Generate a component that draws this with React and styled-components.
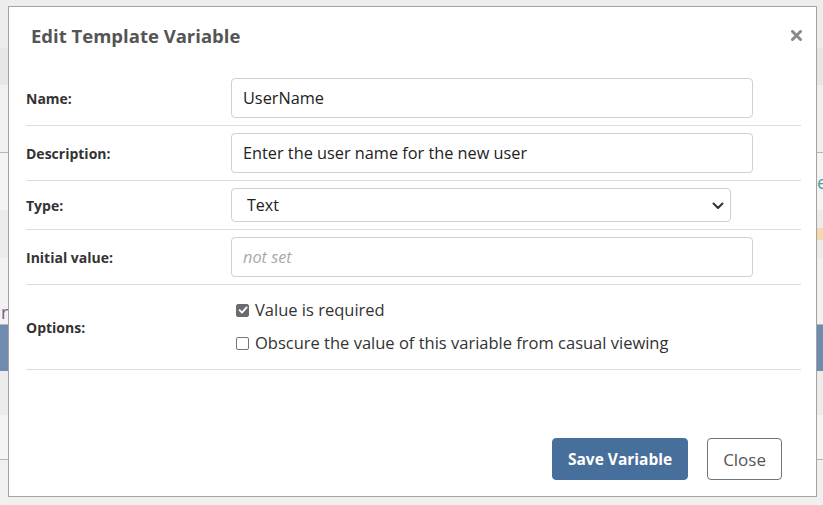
import React, { useState } from 'react'
import styled, { createGlobalStyle } from 'styled-components'

const GlobalStyle = createGlobalStyle`
    html, body {
        margin: 0;
        padding: 0;
    }
    body {
        font-family: "Open Sans", "Liberation Sans", sans-serif;
        color: #333333;
    }
`

const stripes = [
    { h: 48, bg: '#ededed' },
    { h: 37, bg: '#e6e6e6' },
    { h: 68, bg: '#f0f0f0', line: true },
    { h: 57, bg: '#f4f4f4', text: 'e', color: '#4aa0a0', side: 'right' },
    { h: 48, bg: '#ececec', mark: true },
    { h: 42, bg: '#f2f2f2' },
    { h: 25, bg: '#f2f2f2', text: 'r', color: '#7b5c8e', side: 'left', line: true },
    { h: 46, bg: '#6f8cae' },
    { h: 44, bg: '#ececec' },
    { h: 45, bg: '#f4f4f4', line: true },
    { h: 45, bg: '#f0f0f0' },
]

const Check_mark = () => (
    <svg width="10" height="10" viewBox="0 0 10 10">
        <path d="M1.6 5.2 L4 7.6 L8.6 2.4" fill="none" stroke="#fff" strokeWidth="1.9" strokeLinecap="round" strokeLinejoin="round" />
    </svg>
)

const App = () => {

    let [required, setRequired] = useState(true)
    let [obscure, setObscure] = useState(false)

    return (
        <>
            <GlobalStyle />
            <Page>
                <Backdrop>
                    {stripes.map((s, i) => (
                        <Stripe key={i} $h={s.h} $bg={s.bg} $line={s.line}>
                            {s.text ? <StripeText $color={s.color} $side={s.side}>{s.text}</StripeText> : null}
                            {s.mark ? <Mark /> : null}
                        </Stripe>
                    ))}
                </Backdrop>

                <Modal>
                    <Modal_header>
                        <Modal_title>Edit Template Variable</Modal_title>
                        <Close_x aria-label="Close">
                            <svg width="11" height="11" viewBox="0 0 11 11">
                                <path d="M1.5 1.5 L9.5 9.5 M9.5 1.5 L1.5 9.5" stroke="#8a8a8a" strokeWidth="3" strokeLinecap="round" />
                            </svg>
                        </Close_x>
                    </Modal_header>

                    <Modal_body>
                        <Form_row>
                            <Field_label>Name:</Field_label>
                            <Field_cell>
                                <Text_input defaultValue="UserName" />
                            </Field_cell>
                        </Form_row>
                        <Form_row>
                            <Field_label>Description:</Field_label>
                            <Field_cell>
                                <Text_input defaultValue="Enter the user name for the new user" />
                            </Field_cell>
                        </Form_row>
                        <Form_row>
                            <Field_label>Type:</Field_label>
                            <Field_cell>
                                <Select_wrap>
                                    <Select_box defaultValue="text">
                                        <option value="text">Text</option>
                                        <option value="number">Number</option>
                                    </Select_box>
                                    <Chevron width="12" height="8" viewBox="0 0 12 8">
                                        <path d="M1.5 1.5 L6 6 L10.5 1.5" fill="none" stroke="#333" strokeWidth="2" strokeLinecap="round" strokeLinejoin="round" />
                                    </Chevron>
                                </Select_wrap>
                            </Field_cell>
                        </Form_row>
                        <Form_row>
                            <Field_label>Initial value:</Field_label>
                            <Field_cell>
                                <Text_input placeholder="not set" />
                            </Field_cell>
                        </Form_row>
                        <Form_row $pad="8px">
                            <Field_label>Options:</Field_label>
                            <Field_cell>
                                <Check_list>
                                    <Check_label>
                                        <Check_box $checked={required} onClick={() => setRequired(v => !v)}>
                                            {required ? <Check_mark /> : null}
                                        </Check_box>
                                        Value is required
                                    </Check_label>
                                    <Check_label>
                                        <Check_box $checked={obscure} onClick={() => setObscure(v => !v)}>
                                            {obscure ? <Check_mark /> : null}
                                        </Check_box>
                                        Obscure the value of this variable from casual viewing
                                    </Check_label>
                                </Check_list>
                            </Field_cell>
                        </Form_row>
                    </Modal_body>

                    <Modal_footer>
                        <Action_btn $primary>Save Variable</Action_btn>
                        <Action_btn>Close</Action_btn>
                    </Modal_footer>
                </Modal>
            </Page>
        </>
    )
}

const Page = styled.div`
    position: relative;
    width: 823px;
    height: 505px;
    overflow: hidden;
    background: #efefef;
`
const Backdrop = styled.div`
    display: flex;
    flex-direction: column;
`
const Stripe = styled.div`
    height: ${p => p.$h}px;
    background: ${p => p.$bg};
    border-bottom: ${p => p.$line ? '1px solid #b5b5b5' : 'none'};
    box-sizing: border-box;
    display: flex;
    align-items: center;
`
const StripeText = styled.span`
    font-size: 18px;
    color: ${p => p.$color};
    ${p => p.$side === 'left' ? 'margin-left: 1px;' : 'margin-left: auto; margin-right: -4px;'}
`
const Mark = styled.span`
    width: 6px;
    height: 12px;
    background: #f3d9b0;
    margin-left: auto;
`
const Modal = styled.div`
    position: absolute;
    left: 8px;
    top: 6px;
    width: 809px;
    height: 491px;
    box-sizing: border-box;
    background: #ffffff;
    border: 1px solid #a3a3a3;
    display: flex;
    flex-direction: column;
`
const Modal_header = styled.div`
    height: 64px;
    display: flex;
    align-items: center;
    justify-content: space-between;
    padding: 0 14px 7px 22px;
    box-sizing: border-box;
`
const Modal_title = styled.h4`
    margin: 0;
    font-size: 18.5px;
    font-weight: 700;
    color: #555555;
`
const Close_x = styled.button`
    border: none;
    background: none;
    padding: 0;
    display: flex;
    align-items: center;
    cursor: pointer;
`
const Modal_body = styled.div`
    padding: 0 15px 0 17px;
`
const Form_row = styled.div`
    display: grid;
    grid-template-columns: 205px 1fr;
    align-items: center;
    padding: ${p => p.$pad || '7px'} 0;
    border-bottom: 1px solid #dddddd;
`
const Field_label = styled.div`
    font-size: 14px;
    font-weight: 700;
    color: #333333;
`
const Field_cell = styled.div`
    padding-right: 48px;
`
const Text_input = styled.input`
    width: 100%;
    height: 40px;
    box-sizing: border-box;
    border: 1px solid #cfcfd4;
    border-radius: 4px;
    padding: 0 11px;
    font-family: "Open Sans", "Liberation Sans", sans-serif;
    font-size: 16.3px;
    color: #222222;
    outline: none;
    &::placeholder {
        color: #a8a8a8;
        font-style: italic;
    }
`
const Select_wrap = styled.div`
    position: relative;
    width: 500px;
`
const Select_box = styled.select`
    appearance: none;
    width: 100%;
    height: 34px;
    box-sizing: border-box;
    border: 1px solid #cfcfd4;
    border-radius: 4px;
    padding: 0 15px;
    background: #ffffff;
    font-family: "Open Sans", "Liberation Sans", sans-serif;
    font-size: 16px;
    color: #222222;
    outline: none;
`
const Chevron = styled.svg`
    position: absolute;
    right: 7px;
    top: 14px;
    pointer-events: none;
`
const Check_list = styled.div`
    display: flex;
    flex-direction: column;
    gap: 11px;
    padding: 6px 0 7px 5px;
`
const Check_label = styled.label`
    display: flex;
    align-items: center;
    gap: 6px;
    font-size: 16.5px;
    line-height: 22px;
    color: #333333;
    cursor: pointer;
`
const Check_box = styled.span`
    width: 13px;
    height: 13px;
    box-sizing: border-box;
    border-radius: 2px;
    border: 1px solid ${p => p.$checked ? '#6b6b6b' : '#767676'};
    background: ${p => p.$checked ? '#6b6b6b' : '#ffffff'};
    display: flex;
    align-items: center;
    justify-content: center;
`
const Modal_footer = styled.div`
    margin-top: auto;
    display: flex;
    justify-content: flex-end;
    gap: 19px;
    padding: 0 34px 16px 0;
`
const Action_btn = styled.button`
    height: 42px;
    padding: 0 15px;
    border-radius: 4px;
    font-family: "Open Sans", "Liberation Sans", sans-serif;
    font-size: ${p => p.$primary ? '15.5px' : '17px'};
    font-weight: ${p => p.$primary ? 700 : 400};
    color: ${p => p.$primary ? '#ffffff' : '#555555'};
    background: ${p => p.$primary ? '#476f9b' : '#ffffff'};
    border: 1px solid ${p => p.$primary ? '#476f9b' : '#6c757d'};
    cursor: pointer;
`

export default App
